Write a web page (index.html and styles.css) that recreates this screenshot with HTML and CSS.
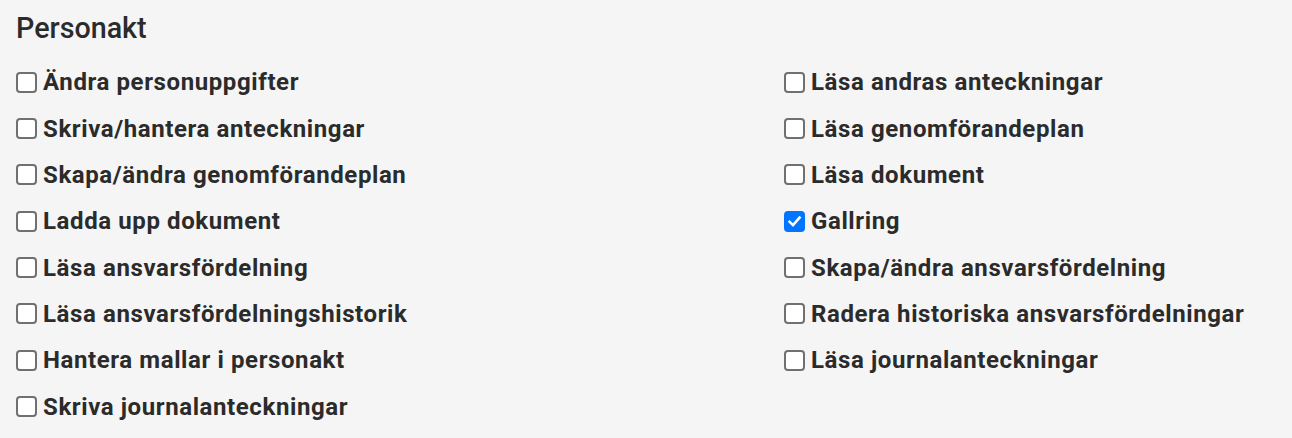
FILE: index.html
```html
<!DOCTYPE html>
<html lang="sv">
<head>
<meta charset="utf-8">
<title>Personakt</title>
<link rel="stylesheet" href="styles.css">
</head>
<body>
<section class="panel">
  <h2 class="panel-title">Personakt</h2>
  <div class="grid">
    <div class="col">
      <label class="item"><input type="checkbox"><span>Ändra personuppgifter</span></label>
      <label class="item"><input type="checkbox"><span>Skriva/hantera anteckningar</span></label>
      <label class="item"><input type="checkbox"><span>Skapa/ändra genomförandeplan</span></label>
      <label class="item"><input type="checkbox"><span>Ladda upp dokument</span></label>
      <label class="item"><input type="checkbox"><span>Läsa ansvarsfördelning</span></label>
      <label class="item"><input type="checkbox"><span>Läsa ansvarsfördelningshistorik</span></label>
      <label class="item"><input type="checkbox"><span>Hantera mallar i personakt</span></label>
      <label class="item"><input type="checkbox"><span>Skriva journalanteckningar</span></label>
    </div>
    <div class="col">
      <label class="item"><input type="checkbox"><span>Läsa andras anteckningar</span></label>
      <label class="item"><input type="checkbox"><span>Läsa genomförandeplan</span></label>
      <label class="item"><input type="checkbox"><span>Läsa dokument</span></label>
      <label class="item"><input type="checkbox" checked><span>Gallring</span></label>
      <label class="item"><input type="checkbox"><span>Skapa/ändra ansvarsfördelning</span></label>
      <label class="item"><input type="checkbox"><span>Radera historiska ansvarsfördelningar</span></label>
      <label class="item"><input type="checkbox"><span>Läsa journalanteckningar</span></label>
    </div>
  </div>
</section>
</body>
</html>
```

FILE: styles.css
```css
html, body {
  margin: 0;
  padding: 0;
  background: #f5f5f5;
}

body {
  font-family: Roboto, "Liberation Sans", Arial, sans-serif;
  color: #2b2b2b;
}

.panel {
  padding: 9px 16px 0 16px;
}

.panel-title {
  margin: 0 0 12px 0;
  font-size: 28.7px;
  font-weight: 500;
  line-height: 38px;
  color: #2b2b2b;
}

.grid {
  display: grid;
  grid-template-columns: 768px 1fr;
}

.col {
  display: flex;
  flex-direction: column;
}

.item {
  display: flex;
  align-items: center;
  height: 46.36px;
  font-size: 24px;
  font-weight: 700;
  letter-spacing: 0.6px;
  line-height: 1;
}

.item input {
  appearance: none;
  -webkit-appearance: none;
  box-sizing: border-box;
  width: 21px;
  height: 21px;
  margin: 0 6px 0 0;
  flex: none;
  border: 2px solid #707070;
  border-radius: 4px;
  background: #ffffff;
}

.item input:checked {
  border-color: #0075ff;
  background-color: #0075ff;
  background-image: url("data:image/svg+xml,%3Csvg xmlns='http://www.w3.org/2000/svg' viewBox='0 0 17 17'%3E%3Cpath d='M3.6 8.8 L7 12.2 L13.6 4.6' fill='none' stroke='white' stroke-width='2.6' stroke-linecap='square' stroke-linejoin='miter'/%3E%3C/svg%3E");
  background-size: 100% 100%;
}
```
